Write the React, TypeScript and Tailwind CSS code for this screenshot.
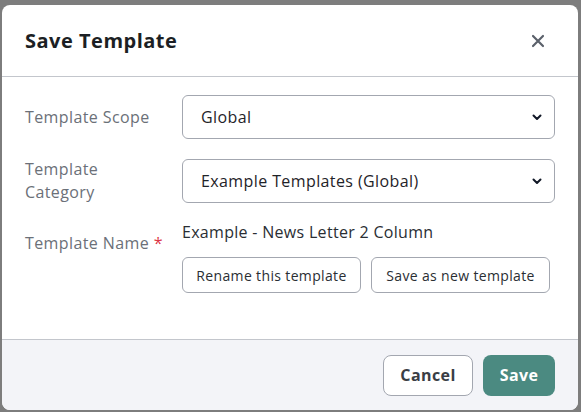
import React from 'react';

const font = { fontFamily: '"Open Sans", "Liberation Sans", sans-serif' };

function Chevron() {
  return (
    <svg width="12" height="12" viewBox="0 0 12 12" className="shrink-0">
      <path d="M2.5 4.5 6 8l3.5-3.5" fill="none" stroke="#111827" strokeWidth="2" strokeLinecap="round" strokeLinejoin="round" />
    </svg>
  );
}

function Select({ value }: { value: string }) {
  return (
    <div className="h-[44px] w-[373px] rounded-[6px] border border-[#a3a7b0] bg-white flex items-center justify-between pl-[18px] pr-[11px] text-[16px] tracking-[0.4px] text-[#1f2328]">
      <span>{value}</span>
      <Chevron />
    </div>
  );
}

export default function App() {
  return (
    <div className="h-[412px] w-[581px] bg-[#7d7d7d] pt-[5px] pl-[2px] overflow-hidden" style={font}>
      <div className="w-[576px] h-[405px] bg-white rounded-[8px] flex flex-col overflow-hidden">
        {/* Header */}
        <div className="h-[72px] shrink-0 flex items-center justify-between pl-[23px] pr-[33px] border-b border-[#c3c6cc]">
          <h2 className="text-[20px] font-bold text-[#1c1f24] tracking-[0.5px]">Save Template</h2>
          <svg width="14" height="14" viewBox="0 0 14 14">
            <path d="M2 2l10 10M12 2 2 12" stroke="#5b616b" strokeWidth="2.2" strokeLinecap="round" />
          </svg>
        </div>

        {/* Body */}
        <div className="flex-1 pt-[18px] pl-[23px] flex flex-col">
          <div className="flex items-center">
            <div className="w-[157px] text-[16px] tracking-[0.4px] text-[#6b7078]">Template Scope</div>
            <Select value="Global" />
          </div>
          <div className="flex items-center mt-[19px]">
            <div className="w-[157px] text-[16px] tracking-[0.4px] leading-[23px] text-[#6b7078]">Template<br />Category</div>
            <Select value="Example Templates (Global)" />
          </div>
          <div className="flex mt-[16px]">
            <div className="w-[157px] pt-[11px] text-[16px] tracking-[0.4px] text-[#6b7078]">
              Template Name <span className="text-[#dc3545]">*</span>
            </div>
            <div className="flex flex-col">
              <div className="text-[16px] tracking-[0.3px] text-[#2a2e33] leading-[24px]">Example - News Letter 2 Column</div>
              <div className="flex gap-[10px] mt-[13px]">
                <button className="h-[36px] w-[179px] rounded-[6px] border border-[#a3a7b0] bg-white text-[14px] tracking-[0.35px] text-[#2a2e33]">Rename this template</button>
                <button className="h-[36px] w-[179px] rounded-[6px] border border-[#a3a7b0] bg-white text-[14px] tracking-[0.35px] text-[#2a2e33]">Save as new template</button>
              </div>
            </div>
          </div>
        </div>

        {/* Footer */}
        <div className="h-[71px] shrink-0 bg-[#f3f4f8] border-t border-[#c3c6cc] flex items-center justify-end gap-[10px] pr-[23px]">
          <button className="h-[41px] w-[90px] rounded-[8px] border border-[#a3a7b0] bg-white text-[16px] tracking-[0.4px] font-bold text-[#3a3e45]">Cancel</button>
          <button className="h-[41px] w-[72px] rounded-[8px] bg-[#4b8a81] text-[16px] tracking-[0.4px] font-bold text-white">Save</button>
        </div>
      </div>
    </div>
  );
}
